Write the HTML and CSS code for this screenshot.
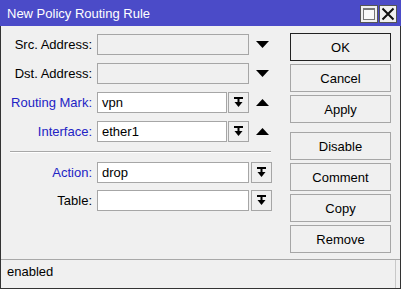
FILE: index.html
```html
<!DOCTYPE html>
<html lang="en">
<head>
  <meta charset="UTF-8" />
  <title>New Policy Routing Rule</title>
  <link rel="stylesheet" href="styles.css">
</head>
<body>
  <div class="window">
    <div class="titlebar">
      <span class="title">New Policy Routing Rule</span>
      <div class="tb-btns">
        <span class="tb-btn"><span class="max-box"></span></span>
        <span class="tb-btn">
          <svg width="14" height="14" viewBox="0 0 14 14"><path d="M1.5 1.5 L12.5 12.5 M12.5 1.5 L1.5 12.5" stroke="#111" stroke-width="2"/></svg>
        </span>
      </div>
    </div>

    <div class="content">
      <div class="form">
        <div class="group">
          <div class="row">
            <span class="lbl">Src. Address:</span>
            <div class="field"><div class="input disabled"></div></div>
            <div class="extra"><svg class="tri" width="13" height="7" viewBox="0 0 13 7"><path d="M0 0 H13 L6.5 7 Z" fill="#000"/></svg></div>
          </div>
          <div class="row">
            <span class="lbl">Dst. Address:</span>
            <div class="field"><div class="input disabled"></div></div>
            <div class="extra"><svg class="tri" width="13" height="7" viewBox="0 0 13 7"><path d="M0 0 H13 L6.5 7 Z" fill="#000"/></svg></div>
          </div>
          <div class="row">
            <span class="lbl blue">Routing Mark:</span>
            <div class="field">
              <div class="input short">vpn</div>
              <span class="drop"><svg width="9" height="11" viewBox="0 0 9 11"><path d="M0 1 H9" stroke="#000" stroke-width="2"/><path d="M4.5 2 V6" stroke="#000" stroke-width="2"/><path d="M0.5 5 H8.5 L4.5 10 Z" fill="#000"/></svg></span>
            </div>
            <div class="extra"><svg class="tri" width="13" height="7" viewBox="0 0 13 7"><path d="M0 7 H13 L6.5 0 Z" fill="#000"/></svg></div>
          </div>
          <div class="row">
            <span class="lbl blue">Interface:</span>
            <div class="field">
              <div class="input short">ether1</div>
              <span class="drop"><svg width="9" height="11" viewBox="0 0 9 11"><path d="M0 1 H9" stroke="#000" stroke-width="2"/><path d="M4.5 2 V6" stroke="#000" stroke-width="2"/><path d="M0.5 5 H8.5 L4.5 10 Z" fill="#000"/></svg></span>
            </div>
            <div class="extra"><svg class="tri" width="13" height="7" viewBox="0 0 13 7"><path d="M0 7 H13 L6.5 0 Z" fill="#000"/></svg></div>
          </div>
        </div>

        <div class="sep"></div>

        <div class="group">
          <div class="row">
            <span class="lbl blue">Action:</span>
            <div class="field"><div class="input">drop</div></div>
            <div class="extra"><span class="drop"><svg width="9" height="11" viewBox="0 0 9 11"><path d="M0 1 H9" stroke="#000" stroke-width="2"/><path d="M4.5 2 V6" stroke="#000" stroke-width="2"/><path d="M0.5 5 H8.5 L4.5 10 Z" fill="#000"/></svg></span></div>
          </div>
          <div class="row">
            <span class="lbl">Table:</span>
            <div class="field"><div class="input"></div></div>
            <div class="extra"><span class="drop"><svg width="9" height="11" viewBox="0 0 9 11"><path d="M0 1 H9" stroke="#000" stroke-width="2"/><path d="M4.5 2 V6" stroke="#000" stroke-width="2"/><path d="M0.5 5 H8.5 L4.5 10 Z" fill="#000"/></svg></span></div>
          </div>
        </div>
      </div>

      <div class="buttons">
        <button class="btn default">OK</button>
        <button class="btn">Cancel</button>
        <button class="btn">Apply</button>
        <button class="btn spaced">Disable</button>
        <button class="btn">Comment</button>
        <button class="btn">Copy</button>
        <button class="btn">Remove</button>
      </div>
    </div>

    <div class="status">enabled</div>
  </div>
</body>
</html>
```

FILE: styles.css
```css
body {
  margin: 0;
  background: #ffffff;
  font-family: "Liberation Sans", Arial, sans-serif;
  font-size: 13px;
  color: #000;
}

.window {
  width: 401px;
  background: #f0f0f0;
}

.titlebar {
  height: 26px;
  background: #4b4bc8;
  display: flex;
  align-items: center;
  justify-content: space-between;
  padding: 0 4px 0 7px;
  box-sizing: border-box;
}
.title {
  color: #fff;
  font-size: 13px;
  padding-top: 1px;
}
.tb-btns {
  display: flex;
  gap: 1px;
  padding-top: 2px;
}
.tb-btn {
  width: 18px;
  height: 18px;
  box-sizing: border-box;
  background: #f0f0f0;
  border: 1px solid #555;
  display: flex;
  align-items: center;
  justify-content: center;
}
.max-box {
  width: 12px;
  height: 12px;
  box-sizing: border-box;
  border: 1px solid #777;
  border-top-width: 2px;
  background: #fafafa;
}

.content {
  display: flex;
  border-left: 1px solid #333;
  border-right: 1px solid #333;
  height: 233px;
  box-sizing: border-box;
}

.form {
  width: 289px;
  padding: 8px 0 0 6px;
  box-sizing: border-box;
}
.group {
  display: flex;
  flex-direction: column;
  gap: 8px;
}
.group + .sep + .group {
  gap: 7px;
}
.row {
  display: grid;
  grid-template-columns: 85px 152px 21px;
  column-gap: 5px;
  align-items: center;
  height: 21px;
}
.row .extra {
  margin-left: -3px;
  display: flex;
  align-items: center;
}
.lbl {
  text-align: right;
  white-space: nowrap;
}
.lbl.blue {
  color: #2323c4;
}
.field {
  display: flex;
  gap: 1px;
  height: 21px;
}
.input {
  flex: 1;
  height: 21px;
  box-sizing: border-box;
  border: 1px solid #a6a6a6;
  background: #fff;
  padding: 2px 0 0 4px;
  line-height: 15px;
}
.input.disabled {
  background: #f0f0f0;
}
.drop {
  width: 21px;
  height: 21px;
  box-sizing: border-box;
  border: 1px solid #a6a6a6;
  background: #f0f0f0;
  display: flex;
  align-items: center;
  justify-content: center;
}
.tri {
  margin-left: 5px;
}

.sep {
  margin: 9px 0 9px 3px;
  width: 261px;
  height: 1px;
  background: #a8a8a8;
  border-bottom: 1px solid #fff;
}

.buttons {
  width: 101px;
  padding-top: 7px;
  display: flex;
  flex-direction: column;
  gap: 3px;
}
.btn {
  height: 28px;
  font-family: "Liberation Sans", Arial, sans-serif;
  font-size: 13px;
  color: #000;
  background: #f0f0f0;
  border: 1px solid #a6a6a6;
  padding: 0;
}
.btn.default {
  border-color: #222;
}
.btn.spaced {
  margin-top: 6px;
}

.status {
  height: 30px;
  box-sizing: border-box;
  border-left: 1px solid #333;
  border-right: 1px solid #333;
  border-bottom: 1px solid #333;
  padding: 5px 0 0 6px;
  background: #f0f0f0;
  box-shadow: inset 0 1px 0 #a8a8a8, inset -4px 0 0 #f0f0f0, inset -5px 0 0 #c8c8c8;
}
```
